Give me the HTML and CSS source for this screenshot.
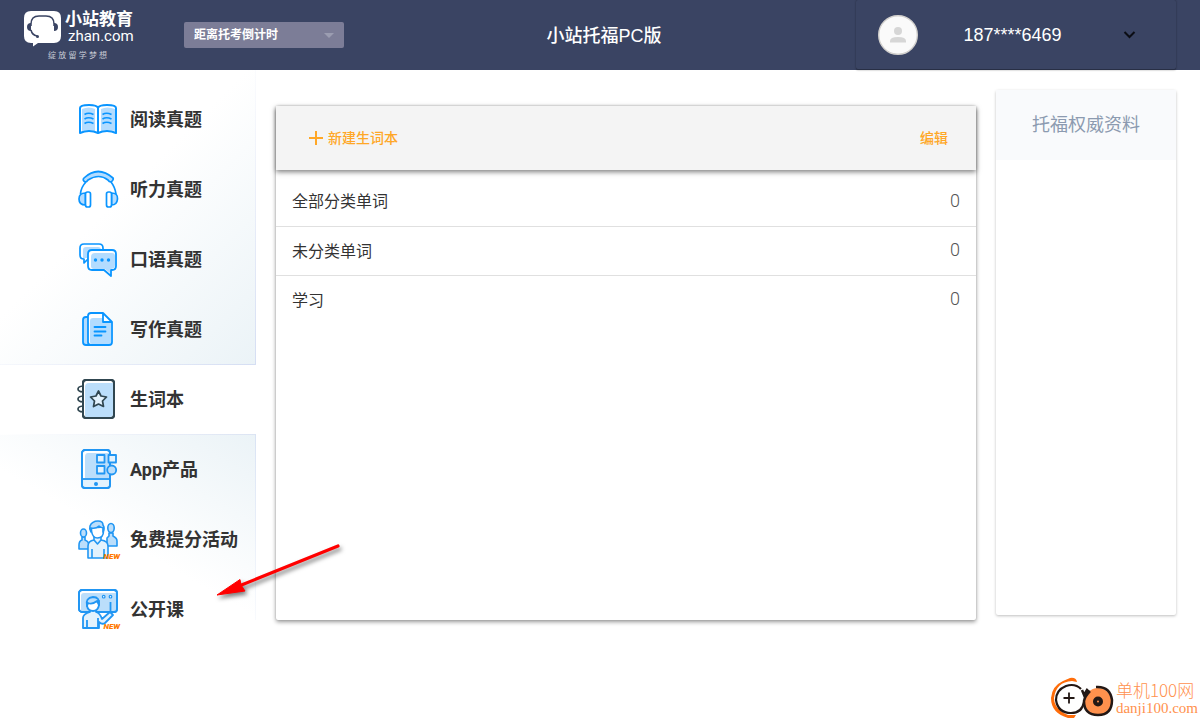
FILE: index.html
```html
<!DOCTYPE html>
<html lang="zh-CN">
<head>
<meta charset="utf-8">
<meta name="viewport" content="width=device-width, initial-scale=1">
<title>小站托福PC版</title>
<link rel="stylesheet" href="styles.css">
</head>
<body>
<header class="topbar">
  <a class="logo" href="#">
    <span class="logo-main">
      <svg class="logo-mark" viewBox="0 0 38 36" aria-hidden="true">
        <path d="M7 0h23q7 0 7 7v18q0 7-7 7H14l-5 3.500V32H7q-7 0-7-7V7q0-7 7-7z" fill="#fff"/>
        <path d="M7 15V13q0-8 8-8h7q8 0 8 8v2" fill="none" stroke="#3a4463" stroke-width="1.500"/>
        <path d="M7 12q-4 0-4 4t4 4zM30 12q4 0 4 4t-4 4z" fill="#3a4463"/>
        <path d="M7 19q1 5 6 6" fill="none" stroke="#3a4463" stroke-width="1.500"/>
        <circle cx="13.500" cy="25.500" r="1.500" fill="#3a4463"/>
      </svg>
      <span class="logo-words">
        <span class="logo-cn">小站教育</span>
        <span class="logo-en">zhan.com</span>
      </span>
    </span>
    <span class="logo-slogan">绽 放 留 学 梦 想</span>
  </a>
  <div class="countdown">
    <select class="countdown-select" aria-label="距离托考倒计时">
      <option>距离托考倒计时</option>
    </select>
    <svg class="countdown-arrow" viewBox="0 0 10 6" aria-hidden="true"><path d="M0 0h10L5 5z" fill="#9b9db1"/></svg>
  </div>
  <h1 class="title">小站托福PC版</h1>
  <button class="account" type="button">
    <svg class="avatar" viewBox="0 0 40 40" aria-hidden="true">
      <circle cx="20" cy="20" r="19.300" fill="#fafafa" stroke="#d2d0cd" stroke-width="1.400"/>
      <circle cx="20" cy="16" r="4" fill="#d6d6d6"/>
      <path d="M12 27.500v-1.500q0-4 8-4t8 4v1.500z" fill="#d6d6d6"/>
    </svg>
    <span class="phone">187****6469</span>
    <svg class="chevron" viewBox="0 0 12 8" aria-hidden="true"><path d="M1 1l5 5 5-5" fill="none" stroke="#0b0d14" stroke-width="2"/></svg>
  </button>
</header>

<main class="workspace">
  <nav class="sidebar" aria-label="主导航">
    <div class="nav-group nav-group-top">
      <a class="nav-item" href="#">
        <svg class="nav-icon" viewBox="0 0 40 40" aria-hidden="true">
          <path d="M4 10q7-3 13 0v22q-6-2-13 0zM23 10q6-3 14 0v22q-8-2-14 0z" fill="#b3dcff"/>
          <path d="M20 9q-1-3-9-3-9 0-9 3v25q9-4 18 0 9-4 18 0V9q0-3-9-3-8 0-9 3zM20 9v24" fill="none" stroke="#0a95ff" stroke-width="2" stroke-linejoin="round"/>
          <path d="M6.500 15.500q4-2.500 9 0M6.500 20q4-2.500 9 0M6.500 24.500q4-2.500 9 0M24.500 15.500q4-2.500 9 0M24.500 20q4-2.500 9 0M24.500 24.500q4-2.500 9 0" fill="none" stroke="#0a95ff" stroke-width="1.700"/>
        </svg>
        <span class="nav-label">阅读真题</span>
      </a>
      <a class="nav-item" href="#">
        <svg class="nav-icon" viewBox="0 0 40 40" aria-hidden="true" stroke="#0a95ff" stroke-width="1.700" stroke-linejoin="round">
          <path d="M8 13Q3 18 2.500 25M33 13q4 5 5 12" fill="none"/>
          <path d="M6 9Q20-4 35 9q1 2-2 4-2 0-3-2-9-7-20 0-1 2-3 2-3-2-1-4z" fill="#b3dcff"/>
          <path d="M7.500 24Q1 24 1 30t6.500 6zM33.500 24q6.500 0 6 6t-6 6z" fill="#b3dcff"/>
          <rect x="7.500" y="23" width="5" height="15" rx="2" fill="#fff"/>
          <rect x="28.500" y="23" width="5" height="15" rx="2" fill="#fff"/>
        </svg>
        <span class="nav-label">听力真题</span>
      </a>
      <a class="nav-item" href="#">
        <svg class="nav-icon" viewBox="0 0 40 40" aria-hidden="true" stroke-linejoin="round">
          <path d="M6 5h15q4 0 4 4v11H7v4l-3-4q-2-1-2-4V9q0-4 4-4z" fill="#fff"/>
          <path d="M8 8h12q3 0 3 3v8H5v-8q0-3 3-3z" fill="#b3dcff"/>
          <path d="M6 5h15q4 0 4 4v11H10l-4 4v-4q-4 0-4-4V9q0-4 4-4z" fill="none" stroke="#0a95ff" stroke-width="1.700"/>
          <path d="M14 11h20q4 0 4 4v12q0 4-4 4h-1v6l-7-6H14q-4 0-4-4V15q0-4 4-4z" fill="#fff"/>
          <path d="M17 14h17q3 0 3 3v9q0 4-5 4v4l-5-4H16q-3 0-3-3v-9q0-4 4-4z" fill="#b3dcff"/>
          <path d="M14 11h20q4 0 4 4v12q0 4-4 4h-1v6l-7-6H14q-4 0-4-4V15q0-4 4-4z" fill="none" stroke="#0a95ff" stroke-width="1.800"/>
          <g fill="#0a95ff"><circle cx="17.500" cy="21" r="1.700"/><circle cx="24" cy="21" r="1.700"/><circle cx="30.500" cy="21" r="1.700"/></g>
        </svg>
        <span class="nav-label">口语真题</span>
      </a>
      <a class="nav-item" href="#">
        <svg class="nav-icon" viewBox="0 0 40 40" aria-hidden="true" stroke-linejoin="round" stroke-linecap="round">
          <path d="M10 8H8q-3 0-3 3v22q0 3 3 3h6" fill="#b3dcff" stroke="#0a95ff" stroke-width="1.800"/>
          <path d="M13 4h12l9 9v20q0 3-3 3H13q-3 0-3-3V7q0-3 3-3z" fill="#fff"/>
          <path d="M15 9h10v4h8v20q0 2-2 2H14q-2 0-2-2V12q0-3 3-3z" fill="#b3dcff"/>
          <path d="M13 4h12l9 9v20q0 3-3 3H13q-3 0-3-3V7q0-3 3-3zM25 4v9h9" fill="none" stroke="#0a95ff" stroke-width="1.800"/>
          <path d="M16.500 18h11M16.500 22.500h11M16.500 26.500h7" fill="none" stroke="#0a95ff" stroke-width="1.800"/>
        </svg>
        <span class="nav-label">写作真题</span>
      </a>
    </div>
    <a class="nav-item" href="#" aria-current="page">
      <svg class="nav-icon" viewBox="0 0 40 40" aria-hidden="true" fill="none" stroke="#304650" stroke-width="2" stroke-linejoin="round">
        <path d="M5 13q-5-.5-5-3t5-3M5 23q-5-.5-5-3t5-3M5 33q-5-.5-5-3t5-3" stroke-width="1.700"/>
        <rect x="5" y="1" width="31" height="38" rx="3" fill="#fff"/>
        <path d="M11 4h24v31q0 3-3 3H8q-1 0-1-2V8q0-4 4-4z" fill="#bbdefb" stroke="none"/>
        <rect x="5" y="1" width="31" height="38" rx="3"/>
        <path d="M20.500 12l2.500 5 5.500 1-4 4 1 5.500-5-2.500-5 2.500 1-5.500-4-4 5.500-1z" fill="#e3f2fd" stroke-width="1.700"/>
      </svg>
      <span class="nav-label">生词本</span>
    </a>
    <div class="nav-group nav-group-bottom">
      <a class="nav-item" href="#">
        <svg class="nav-icon" viewBox="0 0 40 40" aria-hidden="true" stroke="#2196f3" stroke-width="1.800" stroke-linejoin="round">
          <rect x="4" y="1" width="28" height="38" rx="3" fill="#fff"/>
          <path d="M10 4h21v25H7V8q0-4 3-4z" fill="#bbdefb" stroke="none"/>
          <path d="M5 30h26v6q0 2-2 2H7q-2 0-2-2z" fill="#e3f2fd" stroke="none"/>
          <rect x="4" y="1" width="28" height="38" rx="3" fill="none"/>
          <path d="M4 30h28"/>
          <g fill="#e3f2fd"><rect x="19" y="6" width="7.500" height="7.500"/><rect x="30.500" y="6" width="7.500" height="7.500"/><rect x="19" y="17" width="7.500" height="7.500"/><circle cx="33.700" cy="21" r="4.500" fill="#bbdefb"/></g>
          <circle cx="18" cy="35" r="2" fill="#2196f3" stroke="none"/>
        </svg>
        <span class="nav-label">App产品</span>
      </a>
      <a class="nav-item" href="#">
        <span class="icon-wrap">
          <svg class="nav-icon" viewBox="0 0 40 40" aria-hidden="true" stroke="#2196f3" stroke-width="1.600" stroke-linejoin="round">
            <path d="M1 30v-4q0-4 3-5v-3h3v3q3 1 4 4v5zM29 27v-8l2-2v-3h4v3q4 2 4 5v5z" fill="#bbdefb"/>
            <ellipse cx="5.500" cy="14" rx="3" ry="4" fill="#bbdefb"/>
            <ellipse cx="33" cy="9" rx="3.200" ry="4.500" fill="#bbdefb"/>
            <path d="M10 39V27q0-5 6-6v-5h7v5q7 1 7 6v12z" fill="#e3f2fd"/>
            <path d="M16 21l3.500 4 3.500-4M14 30v9M26 30v9" fill="none"/>
            <path d="M13.500 9v3q1 7 6 7 6 0 6-7V8z" fill="#fff"/>
            <path d="M13 13q-2-3-1-6 2-5 8-5 5 0 5 4 2 3 0 7V9q-3-1-4-2-3 3-8 2z" fill="#bbdefb"/>
          </svg>
          <span class="new-tag">NEW</span>
        </span>
        <span class="nav-label">免费提分活动</span>
      </a>
      <a class="nav-item" href="#">
        <span class="icon-wrap">
          <svg class="nav-icon" viewBox="0 0 40 40" aria-hidden="true" stroke="#2196f3" stroke-width="1.800" stroke-linejoin="round">
            <rect x="1" y="1" width="38" height="22" rx="3" fill="#fff"/>
            <path d="M6 4h32v18H3V7q0-3 3-3z" fill="#bbdefb" stroke="none"/>
            <rect x="1" y="1" width="38" height="22" rx="3" fill="none"/>
            <circle cx="25.700" cy="7.700" r="1.300" stroke-width="1.200" fill="#fff"/><circle cx="32.500" cy="7.700" r="1.300" stroke-width="1.200" fill="#fff"/>
            <path d="M32.500 13v9"/>
            <path d="M5 39V29q0-4 7-6v-3h6v3q4 1 6 7l8-7 3 3-8 8q-3 2-6-1v6z" fill="#e3f2fd"/>
            <path d="M9 31v8M20 29v10" fill="none"/>
            <path d="M9 13v4q1 5 6 5t6-6v-4z" fill="#fff"/>
            <path d="M9 17q-2-8 6-9 7 0 6 8l-2-4q-5 4-9 2z" fill="#bbdefb"/>
          </svg>
          <span class="new-tag">NEW</span>
        </span>
        <span class="nav-label">公开课</span>
      </a>
    </div>
  </nav>

  <section class="wordbook" aria-label="生词本">
    <div class="toolbar">
      <button class="action" type="button">
        <svg class="plus" viewBox="0 0 14 14" aria-hidden="true"><path d="M7 0v14M0 7h14" stroke="#ffa726" stroke-width="2"/></svg>
        <span class="action-label">新建生词本</span>
      </button>
      <button class="action" type="button"><span class="action-label">编辑</span></button>
    </div>
    <ul class="word-list">
      <li class="word-row"><span>全部分类单词</span><span class="count">0</span></li>
      <li class="word-row"><span>未分类单词</span><span class="count">0</span></li>
      <li class="word-row"><span>学习</span><span class="count">0</span></li>
    </ul>
  </section>

  <aside class="resources">
    <h2 class="resources-title">托福权威资料</h2>
  </aside>

  <svg class="pointer" viewBox="0 0 136 64" aria-hidden="true">
    <path d="M125 5L26 45" stroke="#f00" stroke-width="3.200" stroke-linecap="round"/>
    <path d="M4 54L27 38.500 28 44 32 50z" fill="#f00" stroke="#f00" stroke-linejoin="round"/>
  </svg>
</main>

<div class="watermark">
  <svg class="watermark-mark" viewBox="0 0 64 44" aria-hidden="true" fill="none">
    <path d="M20 2q6-1 7 4l-5-1Q6 6 4 22q0 11 14 17l8 0-2 3h-6Q1 37 1 22 2 10 13 5z" fill="#ff6d0a"/>
    <path d="M31 13Q25 7 16 10 6 14 6 24q2 13 15 13 11 0 13-11" stroke="#231815" stroke-width="2.200"/>
    <path d="M19 16.500v11M13.500 22h11" stroke="#231815" stroke-width="1.800"/>
    <circle cx="48" cy="25.500" r="13.500" fill="#ff914d"/>
    <path d="M32 14l2 5 3-5 3 3M46 11q14-1 16 13 0 15-14 15-14 0-14-14 1-5 6-10" stroke="#231815" stroke-width="2.500"/>
    <circle cx="48" cy="25.500" r="5" fill="#231815"/><circle cx="48" cy="25.500" r="1" fill="#ff914d"/>
  </svg>
  <span class="watermark-words">
    <span class="watermark-cn">单机100网</span>
    <span class="watermark-en">danji100.com</span>
  </span>
</div>
</body>
</html>
```
FILE: styles.css
```css
* {
  box-sizing: border-box;
}

body {
  margin: 0;
  min-height: 100vh;
  display: flex;
  flex-direction: column;
  position: relative;
  background: #fff;
  color: #333;
  font-family: "Liberation Sans", "Noto Sans CJK SC", sans-serif;
}

a {
  color: inherit;
  text-decoration: none;
}

button,
select {
  font: inherit;
  color: inherit;
  border: 0;
  background: none;
  cursor: pointer;
}

svg {
  display: block;
  flex: none;
}

/* Header */
.topbar {
  display: grid;
  grid-template-columns: 160px 160px 1fr 320px;
  align-items: center;
  height: 70px;
  padding: 0 24px;
  background: #3a4463;
  color: #fff;
}

.logo {
  display: flex;
  flex-direction: column;
  width: 112px;
  padding-top: 2px;
  gap: 3px;
}

.logo-main {
  display: flex;
  gap: 3px;
}

.logo-mark {
  width: 38px;
  height: 36px;
}

.logo-words {
  display: flex;
  flex-direction: column;
  white-space: nowrap;
}

.logo-cn {
  font-size: 17px;
  line-height: 18px;
  font-weight: 700;
}

.logo-en {
  padding-left: 3px;
  font-family: Roboto, sans-serif;
  font-size: 15px;
  line-height: 14px;
}

.logo-slogan {
  padding-left: 24px;
  font-size: 8px;
  line-height: 12px;
  white-space: nowrap;
  color: #c9ccd6;
}

.countdown {
  position: relative;
}

.countdown-select {
  display: block;
  width: 100%;
  height: 26px;
  padding: 0 24px 0 10px;
  border-radius: 2px;
  background: #7c7d97;
  appearance: none;
  font-size: 12px;
  font-weight: 700;
}

.countdown-arrow {
  position: absolute;
  top: 11px;
  right: 10px;
  width: 10px;
  height: 6px;
  pointer-events: none;
}

.title {
  margin: 0;
  padding: 0 0 3px 8px;
  text-align: center;
  font-size: 18px;
  font-weight: 500;
}

.account {
  display: flex;
  align-items: center;
  justify-content: space-between;
  height: 70px;
  padding: 0 40px 0 22px;
  border-radius: 2px;
  box-shadow: 0 0 2px rgba(0, 0, 0, 0.4), inset 0 -1px 0 rgba(0, 0, 0, 0.3);
  font-size: 18px;
}

.avatar {
  width: 40px;
  height: 40px;
}

.phone {
  margin-right: 16px;
}

.chevron {
  width: 13px;
  height: 8px;
}

/* Page body */
.workspace {
  position: relative;
  flex: 1;
  display: grid;
  grid-template-columns: 256px 1fr 180px;
  column-gap: 20px;
  padding-right: 24px;
}

/* Sidebar */
.nav-group-top {
  margin-bottom: -1px;
  padding-top: 14px;
  border-right: 1px solid;
  border-bottom: 1px solid;
  background: linear-gradient(135deg, #fff 45%, #ebf3f7);
  border-image: linear-gradient(135deg, #fff 40%, #d5def3) 1;
}

.nav-group-bottom {
  background:
    linear-gradient(to bottom, #d9e3f4, #f8fafd) right top / 1px 186px no-repeat,
    linear-gradient(to right, #fff, #dce4f3) left top / 100% 1px no-repeat,
    linear-gradient(30deg, #fff 45%, #ebf3f7) left top / 100% 186px no-repeat;
}

.nav-item {
  display: flex;
  align-items: center;
  gap: 12px;
  height: 70px;
  padding-left: 78px;
  font-family: Roboto, "Noto Sans CJK SC", sans-serif;
  font-size: 18px;
  font-weight: 700;
  white-space: nowrap;
}

.nav-label {
  padding-bottom: 3px;
}

.nav-icon {
  width: 40px;
  height: 40px;
  overflow: visible;
}

.icon-wrap {
  position: relative;
}

.new-tag {
  position: absolute;
  right: -2px;
  bottom: -2px;
  font-family: Roboto, sans-serif;
  font-size: 8px;
  line-height: 8px;
  font-weight: 900;
  font-style: italic;
  color: #ff7a00;
}

/* Word book */
.wordbook {
  margin: 36px 0 100px;
  border-radius: 2px;
  background: #fff;
  box-shadow: 0 2px 4px rgba(0, 0, 0, 0.4), 0 0 2px rgba(0, 0, 0, 0.16);
}

.toolbar {
  display: flex;
  align-items: center;
  justify-content: space-between;
  height: 64px;
  padding: 0 28px 0 33px;
  background: #f4f4f4;
  box-shadow: 0 2px 5px rgba(0, 0, 0, 0.5);
}

.action {
  display: flex;
  align-items: center;
  gap: 5px;
  padding: 0;
  font-size: 14px;
  font-weight: 500;
  color: #ffa726;
}

.action-label {
  padding-bottom: 2px;
}

.plus {
  width: 14px;
  height: 14px;
}

.word-list {
  margin: 0;
  padding: 7px 0 0;
  list-style: none;
}

.word-row {
  display: flex;
  align-items: center;
  justify-content: space-between;
  height: 49px;
  padding: 0 16px 3px;
  font-size: 16px;
}

.word-row + .word-row {
  border-top: 1px solid #e0e0e0;
}

.count {
  font-family: Roboto, sans-serif;
  font-size: 18px;
  font-weight: 300;
  color: #555;
}

/* Resources */
.resources {
  margin: 20px 0 105px;
  border-radius: 2px;
  background: #fff;
  box-shadow: 0 1px 3px rgba(0, 0, 0, 0.26);
}

.resources-title {
  margin: 0;
  text-align: center;
  font-size: 18px;
  line-height: 70px;
  font-weight: 400;
  color: #8c9ab0;
  background: #f9fafc;
}

/* Annotation arrow drawn over the page */
.pointer {
  position: absolute;
  left: 213px;
  top: 471px;
  width: 136px;
  height: 64px;
  filter: drop-shadow(2px 3px 2px rgba(0, 0, 0, 0.5));
  pointer-events: none;
}

/* Site mark in the corner */
.watermark {
  position: absolute;
  right: 2px;
  bottom: 0;
  display: flex;
  align-items: center;
  gap: 2px;
  color: #ff914d;
  white-space: nowrap;
}

.watermark-mark {
  width: 64px;
  height: 44px;
}

.watermark-words {
  display: flex;
  flex-direction: column;
}

.watermark-cn {
  font-family: "Noto Sans CJK SC", sans-serif;
  font-size: 17px;
  line-height: 20px;
  font-weight: 300;
}

.watermark-en {
  font-family: "Liberation Serif", serif;
  font-size: 15px;
  line-height: 16px;
}
```
